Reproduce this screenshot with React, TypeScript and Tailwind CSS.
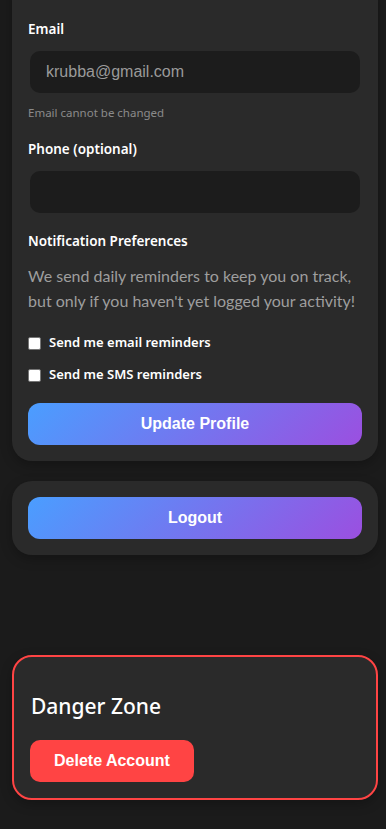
import React from "react";

const label = "block text-[13.5px] font-semibold text-white mb-3 leading-5";
const ui = { fontFamily: '"Noto Sans", "Open Sans", sans-serif' };
const arial = { fontFamily: '"Liberation Sans", Arial, sans-serif' };
const lato = { fontFamily: 'Lato, "Noto Sans", sans-serif' };

export default function App() {
  return (
    <div className="h-[829px] bg-[#1b1b1b] pl-3 pr-2 overflow-hidden" style={ui}>
      <div className="-mt-6 rounded-[20px] bg-[#2a2a2a] px-4 pb-4 pt-[43px] shadow-[0_4px_12px_rgba(0,0,0,0.25)]">
        <label className={label}>Email</label>
        <div className="mx-0.5 h-[42px] rounded-[10px] bg-[#1c1c1c] flex items-center pl-4 text-[16px] text-[#9a9a9a]" style={arial}>
          krubba@gmail.com
        </div>
        <p className="mt-3 text-[11.5px] leading-4 text-[#8a8a8a]">Email cannot be changed</p>
        <label className={label + " mt-[18px]"}>Phone (optional)</label>
        <div className="mx-0.5 h-[42px] rounded-[10px] bg-[#1c1c1c]" />
        <label className={label + " mt-[18px] mb-2.5"}>Notification Preferences</label>
        <p className="text-[16px] leading-[25px] text-[#9e9e9e]" style={lato}>
          We send daily reminders to keep you on track, but only if you haven't yet logged your activity!
        </p>
        <div className="mt-5 flex flex-col gap-[12px]">
          <label className="flex items-center gap-2 h-5 text-[13px] font-semibold text-white">
            <span className="w-[13px] h-[13px] bg-white border border-[#767676] rounded-[2px]" />
            Send me email reminders
          </label>
          <label className="flex items-center gap-2 h-5 text-[13px] font-semibold text-white">
            <span className="w-[13px] h-[13px] bg-white border border-[#767676] rounded-[2px]" />
            Send me SMS reminders
          </label>
        </div>
        <button className="mt-[18px] w-full h-[42px] rounded-[12px] bg-[linear-gradient(135deg,#4a9eff,#9b4fe0)] text-white text-[16px] font-bold" style={arial}>
          Update Profile
        </button>
      </div>

      <div className="mt-5 rounded-[20px] bg-[#2a2a2a] p-4 shadow-[0_4px_12px_rgba(0,0,0,0.25)]">
        <button className="w-full h-[42px] rounded-[12px] bg-[linear-gradient(135deg,#4a9eff,#9b4fe0)] text-white text-[16px] font-bold" style={arial}>
          Logout
        </button>
      </div>

      <div className="mt-[100px] rounded-[20px] border-2 border-[#ff4444] bg-[#2a2a2a] px-4 pb-4 pt-[35px] shadow-[0_4px_12px_rgba(0,0,0,0.25)]">
        <h3 className="text-[21px] leading-[28px] font-medium text-white pl-px">Danger Zone</h3>
        <button className="mt-5 h-[42px] px-6 rounded-[10px] bg-[#ff4444] text-white text-[16px] font-bold" style={arial}>
          Delete Account
        </button>
      </div>
    </div>
  );
}
